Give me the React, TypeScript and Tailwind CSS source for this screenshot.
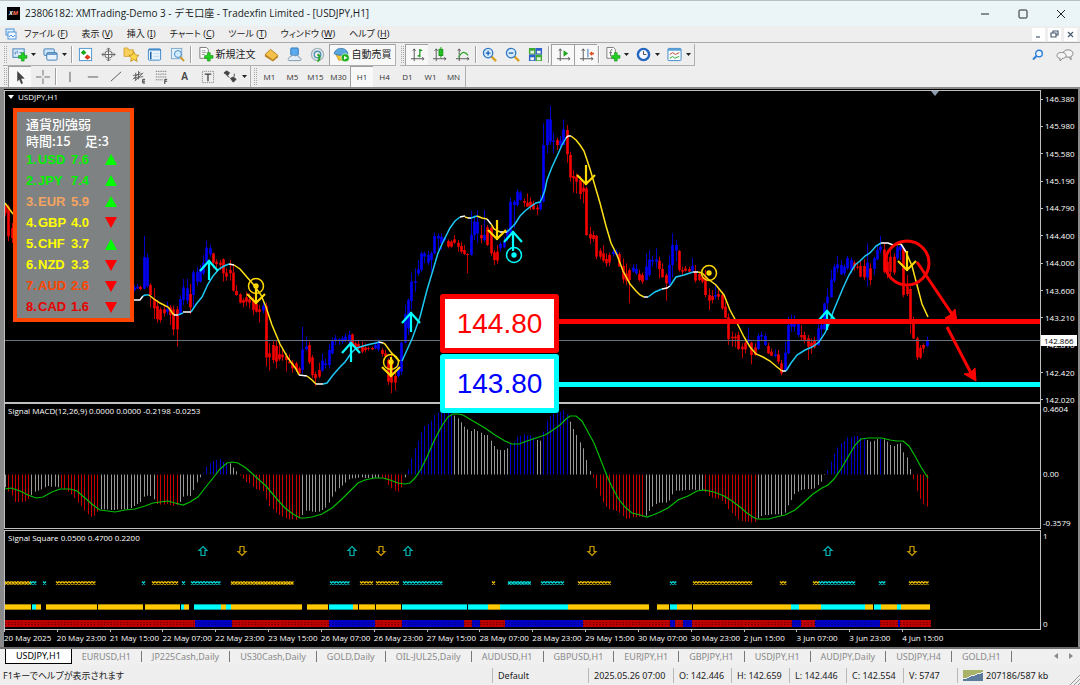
import type { ReactNode } from 'react';
import clsx from 'clsx';

const uiFont = "font-['Noto_Sans','Noto_Sans_CJK_JP',sans-serif]";
const chartFont = "font-['Open_Sans','Noto_Sans',sans-serif]";

const BAR = 3.303;
const barX = (i: number) => 5 + i * BAR;

/* ---------- data ---------- */

// kind high open/close low, three steps per pixel
const candleRuns = [
  { start: 0, top: 88, bars: 'r 345 350 375 385;r 350 355 445 460;r 405 420 450 465' },
  {
    start: 39,
    top: 220,
    bars:
      'b 195 203 210 215;b 192 200 205 207;r 197 201 207 211;b 48 111 206 208;b 100 113 198 204;r 190 195 225 262;r 205 238 265 297;r 240 258 298 308;' +
      'r 262 268 300 308;r 255 268 280 290;b 245 268 275 285;r 255 262 285 315;r 257 268 328 346;r 258 268 328 380;b 225 237 282 283;b 177 202 240 255;' +
      'b 176 205 242 252;r 192 222 262 282;b 151 157 225 262;b 140 155 185 197;b 135 148 185 188;b 105 128 160 165;b 62 83 125 130;b 74 85 103 110;' +
      'r 98 100 128 145;r 118 125 132 160;r 120 128 135 150;r 115 118 160 185;r 145 158 170 182;r 120 150 160 182;r 135 158 212 215;r 195 213 225 227;' +
      'r 220 223 248 250;r 235 240 248 262;r 215 232 245 258;r 220 238 248 265;r 230 243 270 285;r 245 252 275 278;r 255 268 276 308;b 245 257 272 280;' +
      'r 248 258 412 440;r 370 400 412 452;r 360 375 420 430;r 362 378 425 446;r 370 402 418 423;r 388 404 412 423;r 400 408 420 455;r 403 425 430 430;' +
      'r 420 428 445 458;r 425 430 450 455;r 440 445 460 463;b 320 388 450 460;b 350 380 388 392;r 365 375 427 432;r 405 412 465 475;r 455 462 475 498;' +
      'r 428 450 470 475;b 400 422 452 455;b 415 430 435 445;b 372 390 435 445;b 352 363 400 403;b 345 355 362 375;b 355 358 362 375;b 348 355 365 372;' +
      'b 340 350 360 367;b 332 345 365 370;r 340 343 375 380;r 365 370 385 390;r 362 372 385 395;r 365 378 395 400;r 370 383 390 397;r 380 384 387 392;' +
      'r 380 384 388 390;b 365 375 385 388;b 358 368 388 395;r 385 390 402 410;r 390 400 410 415;r 415 420 485 495;r 400 418 488 520;r 450 468 488 512;' +
      'b 430 440 468 472;b 365 368 455 465;b 255 283 368 370;b 235 240 325 345;b 158 185 243 270;b 145 183 188 215;b 120 148 160 168;b 95 100 150 155;' +
      'b 95 100 110 130;b 92 105 128 135;b 95 100 120 155;b 38 48 100 102',
  },
  {
    start: 131,
    top: 90,
    bars:
      'b 430 438 445 480;b 430 440 460 480;b 440 445 450 455;r 448 453 470 475;r 450 455 470 473;r 435 448 458 462;r 450 458 470 485;r 455 468 485 490;' +
      'r 465 480 492 495;r 490 492 495 550;b 362 435 495 497;b 375 395 435 450;b 360 395 430 460;r 405 435 445 460;b 360 435 450 455;r 405 412 465 468;' +
      'r 410 413 490 498;r 480 487 510 525;r 465 485 512 522;b 455 462 475 485;b 440 455 472 475;b 415 425 445 455;b 322 335 430 432;b 330 335 345 415;' +
      'b 298 305 345 350;b 303 308 330 332;r 325 333 338 350;r 310 338 350 350;r 322 335 350 360;r 332 340 358 360;r 345 353 358 376;b 315 335 358 362;' +
      'b 100 165 335 337;b 88 88 165 190;b 47 88 155 165;b 128 152 156 190;r 143 150 165 180;b 138 152 165 175;b 88 118 165 165;r 105 120 193 218;' +
      'r 185 195 262 275;r 240 258 265 308;r 250 260 275 310;r 258 270 312 328;r 275 293 305 340;r 290 295 435 437;r 410 432 445 462;r 423 435 447 455;' +
      'r 435 437 500 508;r 475 482 500 508;r 465 490 512 517;r 490 507 520 530;r 488 495 518 528;b 475 485 492 500;b 478 485 495 500;r 487 492 530 530;' +
      'r 505 528 568 580;r 520 550 572 585;r 535 540 570 640;b 523 533 545 548;b 523 537 550 555;r 540 552 570 575;r 548 555 575 582;b 490 530 570 572;' +
      'b 480 508 555 560;b 498 510 515 530;b 475 508 515 535;r 500 512 537 565;r 520 537 562 562;r 550 555 580 632;b 495 525 580 590;b 430 465 525 562;' +
      'b 450 465 482 515;r 480 483 540 545;r 530 540 545 558;r 528 535 542 545;r 530 537 545 545;b 503 528 542 545;r 525 545 572 578;r 545 552 570 573;' +
      'r 555 560 575 580;r 540 560 615 622;r 595 615 632 660;r 600 618 630 640;b 580 615 620 628;r 595 612 620 630;r 605 615 655 660;r 635 650 683 685',
  },
  {
    start: 219,
    top: 220,
    bars:
      'r 280 292 357 375;r 335 350 355 380;r 340 350 355 382;r 335 345 387 390;r 370 380 388 415;r 355 368 388 400;b 322 358 365 372;r 365 368 405 433;' +
      'r 370 382 405 408;b 340 348 387 390;b 335 345 350 362;b 340 348 375 378;r 368 378 400 402;r 385 395 407 408;b 388 403 408 412;r 390 403 425 432;' +
      'r 420 430 460 466;b 365 398 452 455;b 290 315 400 402;b 283 310 320 335;b 285 305 320 335;b 300 305 345 352;r 315 345 352 363;r 335 345 362 370;' +
      'r 345 355 380 420;r 355 368 380 402;r 350 360 382 385;b 308 325 375 378;b 300 315 328 350;b 248 250 328 330;b 205 230 250 330;b 150 178 232 232;' +
      'b 130 140 182 188;b 108 133 145 158;b 120 135 163 165;b 133 140 160 167;b 108 115 145 150;b 112 120 150 160;r 122 128 140 152;r 125 140 143 148;' +
      'r 125 138 170 172;r 118 138 172 180;b 70 128 172 200;r 130 145 180 195;b 110 115 147 165;b 78 90 118 120;b 48 80 90 100;r 70 88 155 160;' +
      'r 90 125 160 175;r 85 110 155 175;r 100 110 158 165;b 75 82 115 120;b 70 78 90 120;r 80 85 225 232;r 165 200 222 228;r 200 207 310 342;' +
      'r 290 310 355 357;r 350 355 412 420;r 375 383 413 417;r 370 375 385 398;b 350 360 378 382',
  },
];

const candles = candleRuns.flatMap(({ start, top, bars }) =>
  bars.split(';').map((row, n) => {
    const [kind, ...v] = row.split(' ');
    const [high, bodyTop, bodyBottom, low] = v.map((s) => top + Number(s) / 3);
    return { x: Math.round(barX(start + n)), up: kind === 'b', high, bodyTop, bodyBottom, low };
  }),
);

const YELLOW = '#ffe119';
const CYAN = '#1ec8f5';
const WHITE = '#ffffff';

const maRuns: [string, string][] = [
  [YELLOW, '5,203 13,214'],
  [WHITE, '134,300 140,300 143,296'],
  [CYAN, '143,296 145,295 149,295'],
  [YELLOW, '149,295 154,299 160,303 168,307 174,315'],
  [WHITE, '174,315 178,315'],
  [CYAN, '178,315 183,313'],
  [WHITE, '183,312 191,312'],
  [CYAN, '191,312 197,303 202,297 208,284 213,276 219,269 224,266 229,264'],
  [WHITE, '229,264 234,265'],
  [YELLOW, '234,265 240,269 246,276 253,284 261,295 266,307 272,325 280,344 288,358 296,369 299,375'],
  [WHITE, '299,375 307,376'],
  [YELLOW, '307,376 312,380 316,384'],
  [WHITE, '316,384 323,384'],
  [CYAN, '323,384 327,383 333,375 340,367 345,362 352,352 357,348 363,346 371,344 376,343 379,342'],
  [WHITE, '379,342 383,343'],
  [YELLOW, '383,343 385,344 390,351 397,359 400,361'],
  [CYAN, '402,361 407,350 412,339 420,317 427,290 433,270 438,253 443,242 450,228 455,221 460,217'],
  [WHITE, '460,217 465,216'],
  [YELLOW, '465,217 468,218'],
  [WHITE, '468,218 471,218'],
  [CYAN, '471,218 477,216'],
  [YELLOW, '477,216 482,218 487,219'],
  [WHITE, '487,219 491,224'],
  [YELLOW, '491,224 494,229 500,232'],
  [WHITE, '500,232 507,232'],
  [CYAN, '507,232 511,228 515,224 520,216 525,211 530,207 536,203 540,202 542,198 545,190 547,180 552,167 558,154 562,145 566,138'],
  [WHITE, '566,138 568,136 571,136'],
  [YELLOW, '571,136 576,140 580,145 584,151 587,160 590,169 595,186 600,203 606,226 611,243 617,255 623,271 630,284 636,291 640,295 644,297'],
  [WHITE, '644,297 648,297'],
  [CYAN, '648,297 655,292 662,289'],
  [WHITE, '662,289 667,288 670,286'],
  [CYAN, '670,286 676,277 684,275 693,272'],
  [WHITE, '693,272 698,272'],
  [YELLOW, '698,272 702,273 708,279 716,285 724,295 730,310 737,323 744,337 750,347 756,354 763,357 770,361 777,367 782,371'],
  [WHITE, '782,371 786,371'],
  [CYAN, '786,371 791,363 797,355 805,350 812,347 819,342 825,333 830,322 833,312 838,300 843,288 849,275 855,265 860,261 865,256 870,253 876,246 881,243'],
  [WHITE, '881,243 888,243 893,245'],
  [YELLOW, '893,245 901,244'],
  [WHITE, '901,244 906,252'],
  [YELLOW, '906,252 912,266 917,285 922,304 928,317'],
];

// consecutive histogram bars of one colour
const macdRuns: [string, string][] = [
  ['w', '262'],
  ['r', '275 287 306 306 306 304 298'],
  ['w', '285 275 272 268 262 258 260 260 262'],
  ['r', '264 268 275 283 295 308 318 332 343 350 347 335'],
  ['w', '328 328 328 330 330 328 328 328 328 324 318 312 306 290 287 288 298'],
  ['r', '312 314 314 312 315 318 316'],
  ['w', '306 290 287 288 270 247 232'],
  ['b', '220 200 190 183 180 177 185 190'],
  ['w', '190 203 214'],
  ['r', '226 236 246 250 260 268 270 273 298 318 328 338 345 350 355 358 358 360 355'],
  ['w', '345 332 332 335 336 335 330 323 308 290 275 265 257 248 238 235 235 233 232 234 234 235 233 233'],
  ['r', '232 238 255 265 272 275 262'],
  ['w', '232'],
  ['b', '208 175 145 123 97 78 72 62 45 38 35 38 38 40'],
  ['w', '47 55 67 80 88 93 87 93 98 105 105 122 138 148 150 150 145'],
  ['b', '132 125 110 107 103 106 106 112'],
  ['w', '120 122'],
  ['b', '95 62 48 42 40 35 30 42'],
  ['w', '65 87 105 127 145 180 213'],
  ['r', '234 265 287 307 320 327 330 333 338 348 356 355 352 352 350 350'],
  ['w', '347 333 320 312 308 308 308 302 283 272 272 272 270 270 268 270 270 272'],
  ['r', '277 288 293 296 296 303 312 328 340 348 357 363 365 365 368 365'],
  ['w', '355 348 345 345 343 343 343 347 338 316 300 282 275 270 268 267 267 265 255 245 225'],
  ['b', '210 185 160 142 130 123 112 112 108 108 113 113'],
  ['w', '120 125 122 117'],
  ['b', '115'],
  ['w', '118 125 135 138 132 130 157 172 207'],
  ['r', '237 273 297 313 320'],
];

const macdColor: Record<string, string> = { w: '#989898', r: '#c80000', b: '#0000c8' };
const macdBars = macdRuns
  .flatMap(([kind, values]) => values.split(' ').map((v) => ({ kind, y: 400 + Number(v) / 3 })))
  .map((bar, i) => ({ ...bar, x: Math.round(barX(i)) + 0.5 }));

const macdSignal =
  '5,489 11,488 20,491 28,495 36,498 43,497 52,492 60,489 70,489 77,491 85,498 93,505 100,510 108,511 115,512 125,510 135,509 145,506 153,503 160,502 168,501 175,503 183,505 190,502 198,497 205,488 213,478 220,469 227,463 232,462 238,463 246,468 256,477 266,486 276,498 285,508 293,514 300,518 305,518 312,517 322,514 332,508 341,500 350,491 358,483 365,480 374,478 383,478 390,480 398,483 405,484 410,483 415,478 421,469 427,457 433,443 438,433 443,424 448,417 453,414 458,414 463,415 473,421 485,428 495,435 505,441 512,444 519,444 527,441 536,438 545,435 553,430 560,425 566,419 570,416 576,416 582,421 588,432 594,443 600,458 607,476 612,487 618,498 625,507 632,513 640,515 647,517 653,515 660,512 668,508 678,500 688,496 697,491 704,490 714,492 724,496 732,501 740,507 747,513 753,517 757,519 769,519 776,517 785,515 795,510 803,503 813,494 822,488 828,485 834,479 841,469 848,457 855,445 861,439 868,438 882,438 890,440 897,441 903,441 909,446 915,456 921,467 928,478';

type Span = [string, number, number];

const crossSpans: Span[] = [
  ['y', 5, 30], ['c', 30, 36], ['c', 43, 46], ['y', 56, 96], ['c', 142, 145], ['y', 152, 178], ['c', 182, 185],
  ['c', 191, 221], ['y', 231, 294], ['c', 330, 350], ['y', 360, 373], ['y', 376, 399], ['c', 403, 442],
  ['y', 492, 495], ['c', 508, 532], ['c', 541, 565], ['y', 578, 612], ['c', 670, 677], ['y', 693, 753],
  ['y', 780, 786], ['y', 813, 819], ['c', 819, 856], ['c', 879, 885], ['y', 909, 928],
];

const barSpans: Span[] = [
  ['y', 5, 31], ['c', 32, 36], ['y', 36, 41], ['y', 46, 97], ['y', 98, 143], ['y', 145, 180], ['c', 181, 184],
  ['y', 184, 189], ['c', 194, 221], ['y', 221, 226], ['c', 226, 231], ['y', 231, 302], ['y', 307, 328],
  ['c', 329, 353], ['y', 353, 358], ['y', 359, 375], ['y', 376, 401], ['c', 402, 467], ['c', 468, 488],
  ['y', 488, 500], ['c', 500, 568], ['y', 568, 649], ['y', 657, 669], ['c', 670, 677], ['y', 677, 692],
  ['y', 693, 791], ['c', 791, 799], ['y', 799, 821], ['c', 821, 865], ['y', 865, 873], ['c', 874, 881],
  ['y', 881, 897], ['c', 897, 901], ['y', 901, 930],
];

const trendSpans: Span[] = [
  ['r', 5, 195], ['b', 195, 232], ['r', 232, 329], ['b', 329, 375], ['r', 375, 402], ['b', 402, 464],
  ['r', 464, 472], ['b', 472, 480], ['r', 480, 505], ['b', 505, 583], ['r', 583, 670], ['b', 670, 675],
  ['r', 675, 683], ['b', 683, 692], ['r', 692, 792], ['b', 792, 801], ['r', 801, 815], ['b', 815, 880],
  ['r', 880, 898], ['b', 898, 900], ['r', 900, 931],
];

const prices = ['146.380', '145.980', '145.580', '145.190', '144.790', '144.400', '144.000', '143.600', '143.210', '142.810', '142.420', '142.020'];

const dates = [
  '20 May 2025', '20 May 23:00', '21 May 15:00', '22 May 07:00', '22 May 23:00', '23 May 15:00',
  '26 May 07:00', '26 May 23:00', '27 May 15:00', '28 May 07:00', '28 May 23:00', '29 May 15:00',
  '30 May 07:00', '30 May 23:00', '2 Jun 15:00', '3 Jun 07:00', '3 Jun 23:00', '4 Jun 15:00',
];

const strengths = [
  { code: 'USD', value: '7.6', up: true, color: 'text-[#00f000]' },
  { code: 'JPY', value: '7.4', up: true, color: 'text-[#00f000]' },
  { code: 'EUR', value: '5.9', up: true, color: 'text-[#f4a460]' },
  { code: 'GBP', value: '4.0', up: false, color: 'text-[#ffff00]' },
  { code: 'CHF', value: '3.7', up: true, color: 'text-[#ffff00]' },
  { code: 'NZD', value: '3.3', up: false, color: 'text-[#ffff00]' },
  { code: 'AUD', value: '2.6', up: false, color: 'text-[#ff4500]' },
  { code: 'CAD', value: '1.6', up: false, color: 'text-[#e80000]' },
];

const menus = [
  ['ファイル', 'F'], ['表示', 'V'], ['挿入', 'I'], ['チャート', 'C'], ['ツール', 'T'], ['ウィンドウ', 'W'], ['ヘルプ', 'H'],
];

const tabs = [
  'USDJPY,H1', 'EURUSD,H1', 'JP225Cash,Daily', 'US30Cash,Daily', 'GOLD,Daily', 'OIL-JUL25,Daily', 'AUDUSD,H1',
  'GBPUSD,H1', 'EURJPY,H1', 'GBPJPY,H1', 'USDJPY,H1', 'AUDJPY,Daily', 'USDJPY,H4', 'GOLD,H1',
];

/* ---------- icons ---------- */

const axes = <path d="M4.500 2v13M1 12.500h14M3 4l1.500-2L6 4M13 11l2 1.500-2 1.500" fill="none" stroke="#555" />;
const plus = <path d="M10 6h3v3h3v3h-3v3h-3v-3H7V9h3z" fill="#1fd01f" stroke="#0c8a0c" strokeWidth=".6" />;

const icons: Record<string, ReactNode> = {
  newChart: <><rect x="1" y="2" width="12" height="9" fill="#d9ebfa" stroke="#3d7eb8" /><path d="M3.500 8V5M5.500 7V4M8 6h2" stroke="#3d7eb8" />{plus}</>,
  profiles: <><rect x="1" y="2" width="11" height="7" rx="1" fill="#cfe4f7" stroke="#3d7eb8" /><rect x="4" y="6" width="11" height="8" rx="1" fill="#e8f3fc" stroke="#3d7eb8" /><path d="M4 7.500h11" stroke="#3d7eb8" strokeWidth="1.500" /></>,
  market: <><rect x="1.500" y="1.500" width="13" height="13" fill="#fff" stroke="#4c94cf" /><path d="m3 6 3-3 3 3-3 2.500z" fill="#19a819" /><path d="m7 11 3-3 3.500 3-3.500 2.500z" fill="#e03a1e" /></>,
  crosshair: <><circle cx="8" cy="8" r="4" fill="none" stroke="#666" /><path d="M8 1v14M1 8h14M6 3l2-2 2 2M6 13l2 2 2-2M3 6 1 8l2 2M13 6l2 2-2 2" fill="none" stroke="#666" /></>,
  navigator: <><path d="M0 1h4l1 2h5v7H0z" fill="#f8cf5a" stroke="#c99a2a" strokeWidth=".8" /><path d="m10.500 5 1.700 3.400 3.800.5-2.800 2.600.8 3.900-3.500-2-3.400 2 .7-3.900-2.700-2.600 3.800-.5z" fill="#ffd84a" stroke="#b98412" strokeWidth=".8" /></>,
  terminal: <><rect x="1.500" y="2" width="13" height="12" rx="1" fill="#e9f4fd" stroke="#3d86c6" /><path d="M2 3h13" stroke="#3d86c6" strokeWidth="1.500" /><path d="M4 5v8" stroke="#23629c" strokeWidth="1.600" /><path d="M7 7h6M7 10h6" stroke="#bcd9ef" /></>,
  tester: <><rect x="1.500" y="1.500" width="11" height="11" fill="#e3f0fb" stroke="#79a7cd" /><circle cx="8.500" cy="7.500" r="3.700" fill="#d0ecff" stroke="#3e88c4" /><path d="m11 10.500 4 4.500" stroke="#d29a2a" strokeWidth="2" /></>,
  order: <><path d="M2 .500h7l2 2V12H2z" fill="#fff" stroke="#777" /><path d="M4 4h4M4 6h5M4 8h3" stroke="#999" />{plus}</>,
  book: <><path d="m1 8 6-5.500L15 9l-5.500 5z" fill="#f3c14a" stroke="#a87414" strokeWidth=".8" /><path d="m1 8 8.500 6L15 9v2l-5.500 4.500L1 10z" fill="#bb7f1a" /></>,
  community: <><rect x="4" y="1" width="8" height="8" rx="1" fill="#5aaaf0" stroke="#2d78b8" /><path d="M2 14.500c-1.500-2 0-4 2-4 1-2 4-2 5-1 2-1 4 0 4 2 3 0 2 3 1 3z" fill="#e5edf4" stroke="#7b98b0" /></>,
  signals: <><circle cx="8" cy="8" r="6.500" fill="none" stroke="#a5b5c0" strokeWidth="1.500" /><circle cx="8" cy="8" r="3.500" fill="none" stroke="#4d92b8" strokeWidth="1.500" /><path d="M8 8c3 1 3 5 0 7.500" fill="none" stroke="#2aa52a" strokeWidth="2.200" /></>,
  auto: <><path d="M2 8h12l-3 6H5z" fill="#f3c33a" stroke="#c9951f" strokeWidth=".8" /><path d="M0 7c2-5 5-5.500 7.500-5.500S13 2 15 7c-4 2.500-11 2.500-15 0z" fill="#5aa6df" stroke="#2c6ca3" strokeWidth=".8" /><circle cx="12" cy="11.500" r="4.300" fill="#22b022" stroke="#fff" strokeWidth=".6" /><path d="m10.800 9.300 3.400 2.200-3.400 2.200z" fill="#fff" /></>,
  bars: <>{axes}<path d="M10.500 2v9M10.500 3.500H13M8 9.500h2.500" stroke="#149414" fill="none" strokeWidth="1.300" /></>,
  candlesIcon: <>{axes}<path d="M9.500 0v11.500" stroke="#149414" /><rect x="7.500" y="2.500" width="4" height="6.500" fill="#23c023" stroke="#149414" /></>,
  line: <>{axes}<path d="M4 11c3-6 6-7 10-2" fill="none" stroke="#2aa52a" strokeWidth="1.300" /></>,
  zoomIn: <><path d="m10 10 5 5" stroke="#d8a226" strokeWidth="2.600" /><circle cx="6.500" cy="6.500" r="5" fill="#d5ecff" stroke="#3078c4" strokeWidth="1.400" /><path d="M4 6.500h5M6.500 4v5" stroke="#1e62b0" strokeWidth="1.400" /></>,
  zoomOut: <><path d="m10 10 5 5" stroke="#d8a226" strokeWidth="2.600" /><circle cx="6.500" cy="6.500" r="5" fill="#d5ecff" stroke="#3078c4" strokeWidth="1.400" /><path d="M4 6.500h5" stroke="#1e62b0" strokeWidth="1.400" /></>,
  tile: <><path d="M1 1h7v7H1zM8 8h7v7H8z" fill="#3cab2f" /><path d="M8 1h7v7H8zM1 8h7v7H1z" fill="#2f5fc8" /><path d="M2.500 4h4v3h-4zM9.500 4h4v3h-4zM2.500 11h4v3h-4zM9.500 11h4v3h-4z" fill="#e8f4e4" /></>,
  scroll: <>{axes}<path d="m8 3.500 5 3.500-5 3.500z" fill="#20a520" /></>,
  shift: <>{axes}<path d="M9.500 2v9" stroke="#2f6fb5" /><path d="m11 7 3-2.500V6h2v2h-2v1.500z" fill="#dd4a1c" /></>,
  indicators: <><path d="M2 .500h7l2 2V12H2z" fill="#fff" stroke="#777" /><path d="M8 3c-2-1-2 1-2 3v4M4.500 6h3" stroke="#666" fill="none" />{plus}</>,
  clock: <><circle cx="8" cy="8" r="6" fill="#f3f9ff" stroke="#2667c0" strokeWidth="2.600" /><path d="M8 4.500V8h3" stroke="#444" fill="none" /></>,
  template: <><rect x="1" y="1.500" width="14" height="13" rx="1" fill="#f5fbff" stroke="#3d86c6" /><path d="M1 3h14" stroke="#5aa0da" strokeWidth="2" /><path d="m3 8 3-2 3 2 4-2" stroke="#b5452a" fill="none" /><path d="m3 12 3-2 2 2 5-2" stroke="#2aa52a" fill="none" /></>,
  cursor: <path d="m4.500 1 8 8-3.800.4 2 4.600-2 .9-2-4.700-2.200 2.300z" fill="#444" />,
  cross: <path d="M8.500 1v6M8.500 10v6M1 8.500h6M10 8.500h6" stroke="#666" />,
  vline: <path d="M8.500 3v11" stroke="#555" />,
  hline: <path d="M3 8.500h11" stroke="#555" />,
  trend: <path d="M3 13 14 3" stroke="#555" />,
  channel: <><path d="m2 11 8-8M4 13l9-9M2 7l10-2M3 10l10-2M5 4v8M8 2v9" stroke="#555" fill="none" strokeWidth=".9" /><path d="M15 11h-2.500v4H15M12.500 13H15" stroke="#333" fill="none" /></>,
  fibo: <><path d="M2 2.500h12M2 5.500h12M2 8.500h12M2 11.500h7" stroke="#555" strokeDasharray="1 1" /><path d="M14 11h-2.500v5M11.500 13H14" stroke="#333" fill="none" /></>,
  label: <><rect x="2.500" y="2.500" width="12" height="12" fill="none" stroke="#777" strokeDasharray="1 1" /><path d="M5 5.500h7M8.500 5.500V13" stroke="#444" fill="none" strokeWidth="1.400" /></>,
  shapes: <><path d="m1 4 3-2 3 2-2 3zM4 7l3 2" fill="#444" stroke="#444" /><path d="m8 10 3 4 3-3-3-2.500zM12 5v3" fill="#444" stroke="#444" /></>,
};

function Icon({ name }: { name: string }) {
  return (
    <svg viewBox="0 0 16 16" className="size-[15px] shrink-0 overflow-visible" aria-hidden="true">
      {icons[name]}
    </svg>
  );
}

function Caret() {
  return (
    <svg viewBox="0 0 5 3" className="h-[3px] w-[5px]" aria-hidden="true">
      <path d="M0 0h5L2.500 3z" fill="#222" />
    </svg>
  );
}

/* ---------- toolbar ---------- */

function Grip() {
  return <span className="mx-px h-[17px] w-[3px] shrink-0 border-x border-dotted border-[#a8a8a8]" />;
}

function Divider() {
  return <span className="mx-px h-[17px] w-[2px] shrink-0 border-l border-[#a0a0a0] bg-white" />;
}

function Tool({ name, label, pressed, menu }: { name: string; label: string; pressed?: boolean; menu?: boolean }) {
  return (
    <button
      type="button"
      aria-label={label}
      className={clsx(
        'flex h-[21px] shrink-0 items-center justify-center gap-1',
        menu ? 'w-[31px]' : 'w-[23px]',
        pressed && 'border-t border-l border-[#a0a0a0] bg-[#f8f8f8]',
      )}
    >
      <Icon name={name} />
      {menu && <Caret />}
    </button>
  );
}

function Toolbars() {
  return (
    <div className="flex flex-col bg-[#eeeeee] text-[#222]">
      <div className="flex h-[23px] items-center pl-[3px]">
        <div className="flex items-center border-r border-b border-[#b0b0b0]">
          <Grip />
          <Tool name="newChart" label="新規チャート" menu />
          <Tool name="profiles" label="チャートの組表示" menu />
          <Divider />
          <Tool name="market" label="気配値表示" />
          <Tool name="crosshair" label="データウィンドウ" />
          <Tool name="navigator" label="ナビゲーター" />
          <Tool name="terminal" label="ターミナル" />
          <Tool name="tester" label="ストラテジーテスター" />
          <Divider />
          <button type="button" className="flex h-[21px] w-[67px] items-center justify-center gap-[3px] text-[10px] whitespace-nowrap">
            <Icon name="order" />
            新規注文
          </button>
          <Tool name="book" label="メタエディター" />
          <Tool name="community" label="コミュニティ" />
          <Tool name="signals" label="シグナル" />
          <button type="button" className="flex h-[21px] w-[66px] items-center justify-center gap-[3px] border-t border-l border-[#a0a0a0] bg-[#f8f8f8] text-[10px] whitespace-nowrap">
            <Icon name="auto" />
            自動売買
          </button>
        </div>
        <div className="ml-1 flex items-center border-r border-b border-[#b0b0b0]">
          <Grip />
          <Tool name="bars" label="バーチャート" pressed />
          <Tool name="candlesIcon" label="ローソク足" />
          <Tool name="line" label="ラインチャート" />
          <Divider />
          <Tool name="zoomIn" label="拡大" />
          <Tool name="zoomOut" label="縮小" />
          <Tool name="tile" label="整列" />
          <Divider />
          <Tool name="scroll" label="自動スクロール" pressed />
          <Tool name="shift" label="チャートシフト" pressed />
          <Divider />
          <Tool name="indicators" label="インディケータ" menu />
          <Tool name="clock" label="時間足設定" menu />
          <Tool name="template" label="定型チャート" menu />
        </div>
        <div className="ml-auto flex items-center gap-3 pr-1.5">
          <button type="button" aria-label="検索">
            <svg viewBox="0 0 12 12" className="size-[12px]">
              <circle cx="7" cy="4.500" r="3.300" fill="#e9f4ff" stroke="#2f7fd6" strokeWidth="1.400" />
              <path d="M4.500 7 1 10.500" stroke="#2f7fd6" strokeWidth="2" />
            </svg>
          </button>
          <button type="button" aria-label="チャット">
            <svg viewBox="0 0 18 12" className="h-[12px] w-[18px]">
              <ellipse cx="12" cy="4.500" rx="5" ry="3.700" fill="#f4f4f4" stroke="#8a8a8a" />
              <path d="M13 8l2 3V7" fill="#f4f4f4" stroke="#8a8a8a" />
              <ellipse cx="5.500" cy="6.500" rx="4.500" ry="3" fill="#f4f4f4" stroke="#8a8a8a" />
              <path d="M4 9v3l3-3" fill="#f4f4f4" stroke="#8a8a8a" />
            </svg>
          </button>
        </div>
      </div>
      <div className="flex h-[21px] items-center pl-[3px]">
        <div className="flex items-center border-r border-[#b0b0b0]">
          <Grip />
          <Tool name="cursor" label="カーソル" pressed />
          <Tool name="cross" label="クロスヘア" />
          <Divider />
          <Tool name="vline" label="垂直線" />
          <Tool name="hline" label="水平線" />
          <Tool name="trend" label="トレンドライン" />
          <Tool name="channel" label="チャネル" />
          <Tool name="fibo" label="フィボナッチ" />
          <button type="button" className="h-[21px] w-[23px] text-[10px] font-semibold text-[#444]">A</button>
          <Tool name="label" label="テキストラベル" />
          <Tool name="shapes" label="矢印" menu />
        </div>
        <div className={clsx('ml-[2px] flex items-center border-r border-[#b0b0b0] text-[8px] text-[#333]', chartFont)}>
          <Grip />
          {['M1', 'M5', 'M15', 'M30', 'H1', 'H4', 'D1', 'W1', 'MN'].map((frame) => (
            <button
              key={frame}
              type="button"
              className={clsx('h-[21px] w-[23px]', frame === 'H1' && 'border-t border-l border-[#a0a0a0] bg-[#f8f8f8]')}
            >
              {frame}
            </button>
          ))}
        </div>
      </div>
    </div>
  );
}

/* ---------- window chrome ---------- */

function TitleBar() {
  return (
    <header className="flex h-[26px] items-center border-t border-[#b9bfc1] bg-[#ebf5f7] pl-[7px] text-[10px] text-[#1a1a1a]">
      <span className="flex size-[13px] items-center justify-center bg-black text-[6px] font-bold italic text-white">
        X<span className="text-[#ff6a5a]">M</span>
      </span>
      <h1 className="ml-[5px] font-['Open_Sans','Noto_Sans_CJK_JP',sans-serif] whitespace-nowrap">
        23806182: XMTrading-Demo 3 - デモ口座 - Tradexfin Limited - [USDJPY,H1]
      </h1>
      <div className="ml-auto flex">
        {[
          ['最小化', 'M1 5h8'],
          ['最大化', 'M2 1h6q1 0 1 1v6q0 1-1 1H2q-1 0-1-1V2q0-1 1-1z'],
          ['閉じる', 'M1 1l8 8M9 1L1 9'],
        ].map(([label, d]) => (
          <button key={label} type="button" aria-label={label} className="flex h-[25px] w-[38px] items-center justify-center">
            <svg viewBox="0 0 10 10" className="size-[10px]">
              <path d={d} fill="none" stroke="#222" />
            </svg>
          </button>
        ))}
      </div>
    </header>
  );
}

function MenuBar() {
  return (
    <nav className="flex h-[17px] items-center border-b border-[#a8a8a8] bg-[#eeeeee] pl-[5px] text-[9px] text-[#222] [font-feature-settings:'palt']">
      <svg viewBox="0 0 12 12" className="size-[12px]" aria-hidden="true">
        <rect x="1" y="1" width="8" height="6" fill="#dceeff" stroke="#4c94d8" />
        <rect x="3" y="4" width="8" height="7" fill="#f4faff" stroke="#4c94d8" />
        <path d="m4 9 2-2 2 2 2-2" fill="none" stroke="#4c94d8" />
      </svg>
      <div className="ml-[7px] flex gap-[14px]">
        {menus.map(([name, key]) => (
          <button key={key} type="button" className="whitespace-nowrap">
            {name} (<u>{key}</u>)
          </button>
        ))}
      </div>
      <div className="ml-auto flex gap-[3px] pr-[3px]">
        {[
          ['最小化', 'M2 7h4'],
          ['元に戻す', 'M3 3V1h5v4H6M1 3h5v4H1z'],
          ['閉じる', 'M2 2l5 5M7 2L2 7'],
        ].map(([label, d]) => (
          <button key={label} type="button" aria-label={`チャートを${label}`} className="flex size-[13px] items-center justify-center bg-white">
            <svg viewBox="0 0 9 9" className="size-[9px]">
              <path d={d} fill="none" stroke="#465a6e" strokeWidth="1.200" />
            </svg>
          </button>
        ))}
      </div>
    </nav>
  );
}

/* ---------- charts ---------- */

function SignalArrow({ x, y, up }: { x: number; y: number; up?: boolean }) {
  return (
    <path
      d={up ? `M${x} ${y + 20}V${y}M${x - 9} ${y + 11}L${x} ${y + 1}L${x + 9} ${y + 11}` : `M${x} ${y - 20}V${y}M${x - 9} ${y - 10}L${x} ${y - 1}L${x + 9} ${y - 10}`}
      fill="none"
      stroke={up ? '#00ffff' : '#ffd800'}
      strokeWidth="2.200"
    />
  );
}

function Target({ x, y, color }: { x: number; y: number; color: string }) {
  return (
    <g>
      <circle cx={x} cy={y} r="7.500" fill="none" stroke={color} strokeWidth="1.500" />
      <circle cx={x} cy={y} r="2.700" fill={color} />
    </g>
  );
}

function PriceChart() {
  return (
    <svg viewBox="5 91 1035 311" preserveAspectRatio="xMinYMin meet" className="block h-[311px] w-full" role="img" aria-label="USDJPY H1">
      <path d="M931 91h8l-4 5z" fill="#8c9cb0" />
      {candles.map(({ x, up, high, low, bodyTop, bodyBottom }) => (
        <g key={x} fill={up ? '#0000f8' : '#f80000'}>
          <rect x={x} y={high} width="1" height={low - high} opacity=".8" />
          <rect x={x - 0.8} y={bodyTop} width="2.600" height={Math.max(bodyBottom - bodyTop, 1)} />
        </g>
      ))}
      <path d="M5 340.500h1035" stroke="#66727f" />
      {maRuns.map(([color, points]) => (
        <polyline key={points} points={points} fill="none" stroke={color} strokeWidth="1.500" />
      ))}
      <Target x={256} y={286} color="#ffd800" />
      <Target x={391} y={362} color="#ffd800" />
      <Target x={514} y={255} color="#00ffff" />
      <Target x={709} y={273} color="#ffd800" />
      <SignalArrow x={209} y={260} up />
      <SignalArrow x={351} y={342} up />
      <SignalArrow x={411} y={312} up />
      <SignalArrow x={513} y={231} up />
      <SignalArrow x={827} y={310} up />
      <SignalArrow x={256} y={304} />
      <SignalArrow x={391} y={377} />
      <SignalArrow x={497} y={240} />
      <SignalArrow x={586} y={185} />
      <SignalArrow x={907} y={271} />
      <path d="M556 321.500h484" stroke="#ff0000" strokeWidth="5" />
      <path d="M556 384.500h484" stroke="#00ffff" strokeWidth="5" />
      <g fill="none" stroke="#ff0000" strokeWidth="3">
        <circle cx="907" cy="263" r="22" />
        <path d="M917 262l37 55M947 327l26 50" />
      </g>
      <path d="M957 322l-12-4 5-3 5-6zM976 381l-12-7 6-1 5-5z" fill="#ff0000" stroke="#ff0000" />
    </svg>
  );
}

function MacdChart() {
  return (
    <svg viewBox="5 404 1035 124" preserveAspectRatio="xMinYMin meet" className="block h-[124px] w-full" role="img" aria-label="MACD">
      {macdBars.map(({ x, y, kind }) => (
        <path key={x} d={`M${x} 474.500V${y}`} stroke={macdColor[kind]} />
      ))}
      <polyline points={macdSignal} fill="none" stroke="#00be00" strokeWidth="1.200" />
    </svg>
  );
}

function SquareChart() {
  const crosses = crossSpans.map(([kind, from, to]) => {
    let d = '';
    for (let x = from; x < to - 1; x += BAR) d += `M${x} 581.500l3 3M${x + 3} 581.500l-3 3`;
    return { kind, d };
  });
  return (
    <svg viewBox="5 531 1035 98" preserveAspectRatio="xMinYMin meet" className="block h-[98px] w-full" role="img" aria-label="Signal Square">
      {[203, 352, 408, 828].map((x) => (
        <path key={x} d={`M${x} 546.500l4 4h-2v5h-4v-5h-2z`} fill="none" stroke="#00b4b4" strokeWidth="1.200" />
      ))}
      {[242, 381, 592, 912].map((x) => (
        <path key={x} d={`M${x} 555.500l4-4h-2v-5h-4v5h-2z`} fill="none" stroke="#c89a00" strokeWidth="1.200" />
      ))}
      {crosses.map(({ kind, d }) => (
        <path key={d} d={d} stroke={kind === 'y' ? '#f0c000' : '#00dcdc'} strokeWidth="1.300" fill="none" />
      ))}
      {barSpans.map(([kind, from, to]) => (
        <g key={from} fill={kind === 'y' ? '#a88400' : '#00a0a0'}>
          <rect x={from} y="604" width={to - from} height="6" />
          <rect x={from} y="605" width={to - from} height="4" fill={kind === 'y' ? '#ffc800' : '#00ffff'} />
        </g>
      ))}
      {trendSpans.map(([kind, from, to]) => (
        <g key={from}>
          <rect x={from} y="620" width={to - from} height="7" fill={kind === 'r' ? '#c00000' : '#0000c8'} />
          <path
            d={`M${from} 622.500H${to}M${from} 624.500H${to}`}
            stroke={kind === 'r' ? '#4a0000' : '#00005a'}
            strokeDasharray="1 2.300"
          />
        </g>
      ))}
    </svg>
  );
}

function StrengthPanel() {
  return (
    <section className="absolute top-[17px] left-[8px] w-[121px] border-[4px] border-[#ff4500] bg-[#7e8283] pt-[3px] pl-[9px] font-['Liberation_Sans','Noto_Sans_CJK_JP',sans-serif] text-[13px] font-bold">
      <div className="font-['Noto_Sans_CJK_JP',sans-serif] text-[13px] leading-[17px] font-medium text-white">
        <p>通貨別強弱</p>
        <p className="flex gap-[14px]">
          <span>時間:15</span>
          <span>足:3</span>
        </p>
      </div>
      <ol className="grid h-[169px] grid-rows-8">
        {strengths.map(({ code, value, up, color }, i) => (
          <li key={code} className={clsx('flex items-center', color)}>
            <span className="w-[12px]">{i + 1}.</span>
            <span className="w-[33px]">{code}</span>
            <span className="w-[34px]">{value}</span>
            <svg viewBox="0 0 12 11" className="h-[11px] w-[12px]" aria-hidden="true">
              <path d={up ? 'M0 11h12L6 0z' : 'M0 0h12L6 11z'} fill={up ? '#00ff00' : '#ff0000'} />
            </svg>
          </li>
        ))}
      </ol>
    </section>
  );
}

function Pane({ chart, axis, children }: { chart: ReactNode; axis: ReactNode; children?: ReactNode }) {
  return (
    <div className="flex">
      <div className="relative min-w-0 flex-1 border border-[#c0c0c0]">
        {chart}
        {children}
      </div>
      <div className="relative flex w-[37px] shrink-0 flex-col justify-between">{axis}</div>
    </div>
  );
}

function Charts() {
  return (
    <main className={clsx('border-t-2 border-r-2 border-l-4 border-[#8a8a8a] bg-black pt-px text-[8px] leading-[12px] text-white', chartFont)}>
      <Pane
        chart={<PriceChart />}
        axis={
          <>
            <ol className="absolute top-[3px] left-0 flex h-[313px] flex-col justify-between">
              {prices.map((price) => (
                <li key={price} className="flex items-center gap-[2px]">
                  <span className="h-px w-[2px] bg-[#c0c0c0]" />
                  {price}
                </li>
              ))}
            </ol>
            <span className="absolute top-[245px] left-0 w-[36px] bg-white pl-[3px] leading-[11px] text-black">142.866</span>
          </>
        }
      >
        <p className="absolute top-0 left-[3px] flex items-center gap-[4px]">
          <svg viewBox="0 0 6 4" className="h-[4px] w-[6px]" aria-hidden="true">
            <path d="M0 0h6L3 4z" fill="#fff" />
          </svg>
          USDJPY,H1
        </p>
        <StrengthPanel />
        <div className="absolute top-[203px] left-[435px] z-10 flex w-[119px] flex-col gap-px font-['Liberation_Sans',sans-serif] text-[28px]">
          <div className="flex h-[59px] items-center justify-center rounded-[3px] border-[5px] border-[#ff0000] bg-white text-[#ff0000]">144.80</div>
          <div className="flex h-[59px] items-center justify-center rounded-[3px] border-[5px] border-[#00ffff] bg-white text-[#0000ff]">143.80</div>
        </div>
      </Pane>
      <Pane
        chart={<MacdChart />}
        axis={
          <>
            <span className="pl-[2px]">0.4604</span>
            <span className="mt-[16px] pl-[2px]">0.00</span>
            <span className="pl-[2px]">-0.3579</span>
          </>
        }
      >
        <p className="absolute top-px left-[3px]">Signal MACD(12,26,9) 0.0000 0.0000 -0.2198 -0.0253</p>
      </Pane>
      <div className="mt-px">
        <Pane
          chart={<SquareChart />}
          axis={
            <>
              <span className="pl-[2px]">1</span>
              <span className="pl-[2px]">0</span>
            </>
          }
        >
          <p className="absolute top-px left-[3px]">Signal Square 0.0500 0.4700 0.2200</p>
        </Pane>
      </div>
      <ol className="grid h-[17px] w-[951px] grid-cols-18">
        {dates.map((date) => (
          <li key={date} className="flex flex-col leading-[11px] whitespace-nowrap">
            <span className="h-[2px] w-px bg-[#c0c0c0]" />
            {date}
          </li>
        ))}
      </ol>
    </main>
  );
}

function ChartTabs() {
  return (
    <div className="flex h-[18px] items-start border-t-2 border-[#6e6e6e] bg-[#f0f0f0] pl-[5px] text-[9px] text-[#8a8a8a]">
      {tabs.map((tab, i) => (
        <button
          key={i}
          type="button"
          className={clsx(
            'flex shrink-0 items-center px-[10px] whitespace-nowrap',
            i === 0 ? 'h-[15px] border-x border-b border-black bg-white text-black' : 'mt-[2px] h-[11px] border-r border-[#777]',
          )}
        >
          {tab}
        </button>
      ))}
      <div className="ml-auto flex h-[14px] items-center gap-[11px] pr-[7px]">
        <button type="button" aria-label="前のタブ" className="flex">
          <svg viewBox="0 0 4 6" className="h-[6px] w-[4px]"><path d="M4 0v6L0 3z" fill="#888" /></svg>
        </button>
        <button type="button" aria-label="次のタブ" className="flex">
          <svg viewBox="0 0 4 6" className="h-[6px] w-[4px]"><path d="M0 0v6l4-3z" fill="#888" /></svg>
        </button>
      </div>
    </div>
  );
}

function StatusCell({ width, children }: { width: string; children: ReactNode }) {
  return <span className={clsx('flex h-[15px] shrink-0 items-center border-l border-[#b8b8b8] pl-[5px]', width)}>{children}</span>;
}

function StatusBar() {
  return (
    <footer className="flex h-[21px] items-center bg-[#eeeeee] pl-[3px] text-[9px] whitespace-nowrap text-[#222]">
      <span className="flex-1 [font-feature-settings:'palt']">F1キーでヘルプが表示されます</span>
      <StatusCell width="w-[96px]">Default</StatusCell>
      <StatusCell width="w-[85px]">2025.05.26 07:00</StatusCell>
      <StatusCell width="w-[58px]">O: 142.446</StatusCell>
      <StatusCell width="w-[58px]">H: 142.659</StatusCell>
      <StatusCell width="w-[57px]">L: 142.446</StatusCell>
      <StatusCell width="w-[57px]">C: 142.554</StatusCell>
      <StatusCell width="w-[54px]">V: 5747</StatusCell>
      <StatusCell width="w-[111px]">
        <svg viewBox="0 0 20 11" className="mr-[3px] h-[11px] w-[20px]" aria-hidden="true">
          <path d="M1 0v8M3 0v8M5 0v7M7 0v6M9 0v5M11 0v5M13 0v4M15 0v3M17 0v3M19 0v2" stroke="#8a9a30" strokeWidth="1.400" />
          <path d="M1 9v2M3 9v2M5 8v3M7 7v4M9 6v5M11 6v5M13 5v6M15 4v7M17 4v7M19 3v8" stroke="#1e4a78" strokeWidth="1.400" />
        </svg>
        207186/587 kb
      </StatusCell>
      <svg viewBox="0 0 12 12" className="mt-auto size-[12px]" aria-hidden="true">
        <path d="M1 12 12 1M5 12l7-7M9 12l3-3" stroke="#999" />
      </svg>
    </footer>
  );
}

export default function App() {
  return (
    <div className={clsx('flex min-h-screen flex-col bg-[#eeeeee]', uiFont)}>
      <TitleBar />
      <MenuBar />
      <Toolbars />
      <Charts />
      <ChartTabs />
      <StatusBar />
    </div>
  );
}
